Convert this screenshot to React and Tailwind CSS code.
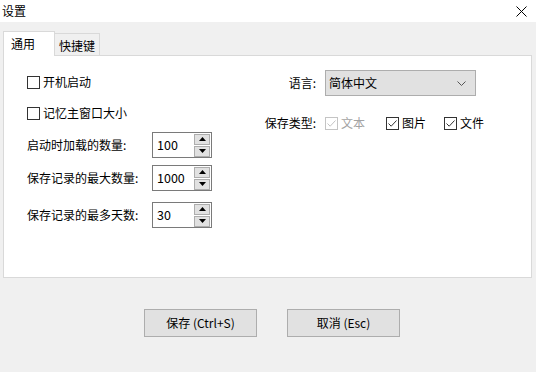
import React from "react";

const font = { fontFamily: '"Noto Sans CJK SC", "Noto Sans", sans-serif' };

function CheckBox({ checked, disabled, label }) {
    const border = disabled ? "border-[#c4c4c4]" : "border-[#333333]";
    const stroke = disabled ? "#c4c4c4" : "#333333";
    return (
        <div className="flex items-center h-[16px]">
            <div className={`w-[13px] h-[13px] border ${border} bg-white flex items-center justify-center`}>
                {checked && (
                    <svg width="11" height="11" viewBox="0 0 11 11">
                        <path d="M1.5 5.5 L4.2 8.2 L9.5 2.5" fill="none" stroke={stroke} strokeWidth="1" />
                    </svg>
                )}
            </div>
            <span className={`ml-[3px] text-[12px] leading-[16px] ${disabled ? "text-[#a3a3a3]" : "text-black"}`}>
                {label}
            </span>
        </div>
    );
}

function Spin({ value }) {
    return (
        <div className="w-[60px] h-[26px] border border-[#7a7a7a] bg-white flex items-center">
            <span className="flex-1 pl-[4px] text-[12.5px] leading-[14px] text-black">{value}</span>
            <div className="flex flex-col gap-[1px] mr-[1px]">
                <div className="w-[16px] h-[11px] bg-[#e1e1e1] border border-[#adadad] flex items-center justify-center">
                    <svg width="7" height="4" viewBox="0 0 7 4"><path d="M0 4 L3.5 0 L7 4 Z" fill="#000" /></svg>
                </div>
                <div className="w-[16px] h-[11px] bg-[#e1e1e1] border border-[#adadad] flex items-center justify-center">
                    <svg width="7" height="4" viewBox="0 0 7 4"><path d="M0 0 L3.5 4 L7 0 Z" fill="#000" /></svg>
                </div>
            </div>
        </div>
    );
}

function SpinRow({ label, value, className }) {
    return (
        <div className={`flex items-center h-[26px] ${className}`}>
            <span className="w-[125px] text-[12px] leading-[16px] text-black">{label}</span>
            <Spin value={value} />
        </div>
    );
}

export default function App() {
    return (
        <div className="w-[536px] h-[372px] bg-[#f0f0f0] overflow-hidden" style={font}>
            {/* title bar */}
            <div className="h-[22px] bg-white flex items-center justify-between pl-[2px] pr-[9px]">
                <span className="text-[12px] leading-[16px] text-black">设置</span>
                <svg width="11" height="11" viewBox="0 0 11 11">
                    <path d="M0.5 0.5 L10.5 10.5 M10.5 0.5 L0.5 10.5" stroke="#000" strokeWidth="1" />
                </svg>
            </div>

            {/* tabs */}
            <div className="flex items-end pl-[3px] mt-[9px]">
                <div className="relative z-10 -mb-px w-[52px] h-[25px] bg-white border border-b-0 border-[#d9d9d9] flex items-center pl-[7px]">
                    <span className="text-[12px] leading-[16px] text-black">通用</span>
                </div>
                <div className="w-[45px] h-[22px] border border-l-0 border-b-0 border-[#d9d9d9] bg-[#f0f0f0] flex items-center pl-[4px] pt-[2px]">
                    <span className="text-[12px] leading-[16px] text-black">快捷键</span>
                </div>
            </div>

            {/* panel */}
            <div className="ml-[3px] w-[529px] h-[223px] bg-white border border-[#d9d9d9] flex">
                <div className="pl-[23px] pt-[18px] w-[229px] flex flex-col">
                    <CheckBox label="开机启动" />
                    <div className="mt-[15px]">
                        <CheckBox label="记忆主窗口大小" />
                    </div>
                    <SpinRow className="mt-[11px]" label="启动时加载的数量:" value="100" />
                    <SpinRow className="mt-[7px]" label="保存记录的最大数量:" value="1000" />
                    <SpinRow className="mt-[11px]" label="保存记录的最多天数:" value="30" />
                </div>

                <div className="pl-[25px] pt-[14px] flex flex-col">
                    <div className="flex items-center h-[26px]">
                        <span className="w-[58px] text-right text-[12px] leading-[16px] text-black">语言:</span>
                        <div className="ml-[9px] w-[151px] h-[26px] bg-[#e1e1e1] border border-[#adadad] flex items-center justify-between pl-[3px] pr-[9px]">
                            <span className="text-[12px] leading-[16px] text-black">简体中文</span>
                            <svg width="9" height="5" viewBox="0 0 9 5">
                                <path d="M0.5 0.5 L4.5 4.5 L8.5 0.5" fill="none" stroke="#555" strokeWidth="1" />
                            </svg>
                        </div>
                    </div>
                    <div className="flex items-center mt-[19px] h-[16px]">
                        <span className="w-[58px] text-right text-[12px] leading-[16px] text-black">保存类型:</span>
                        <div className="ml-[9px] flex items-center">
                            <CheckBox checked disabled label="文本" />
                            <div className="ml-[21px]">
                                <CheckBox checked label="图片" />
                            </div>
                            <div className="ml-[18px]">
                                <CheckBox checked label="文件" />
                            </div>
                        </div>
                    </div>
                </div>
            </div>

            {/* buttons */}
            <div className="flex pl-[144px] mt-[31px] gap-[30px]">
                <button className="w-[113px] h-[28px] bg-[#e1e1e1] border border-[#adadad] text-[12px] leading-[16px] text-black">
                    保存 (Ctrl+S)
                </button>
                <button className="w-[113px] h-[28px] bg-[#e1e1e1] border border-[#adadad] text-[12px] leading-[16px] text-black">
                    取消 (Esc)
                </button>
            </div>
        </div>
    );
}
